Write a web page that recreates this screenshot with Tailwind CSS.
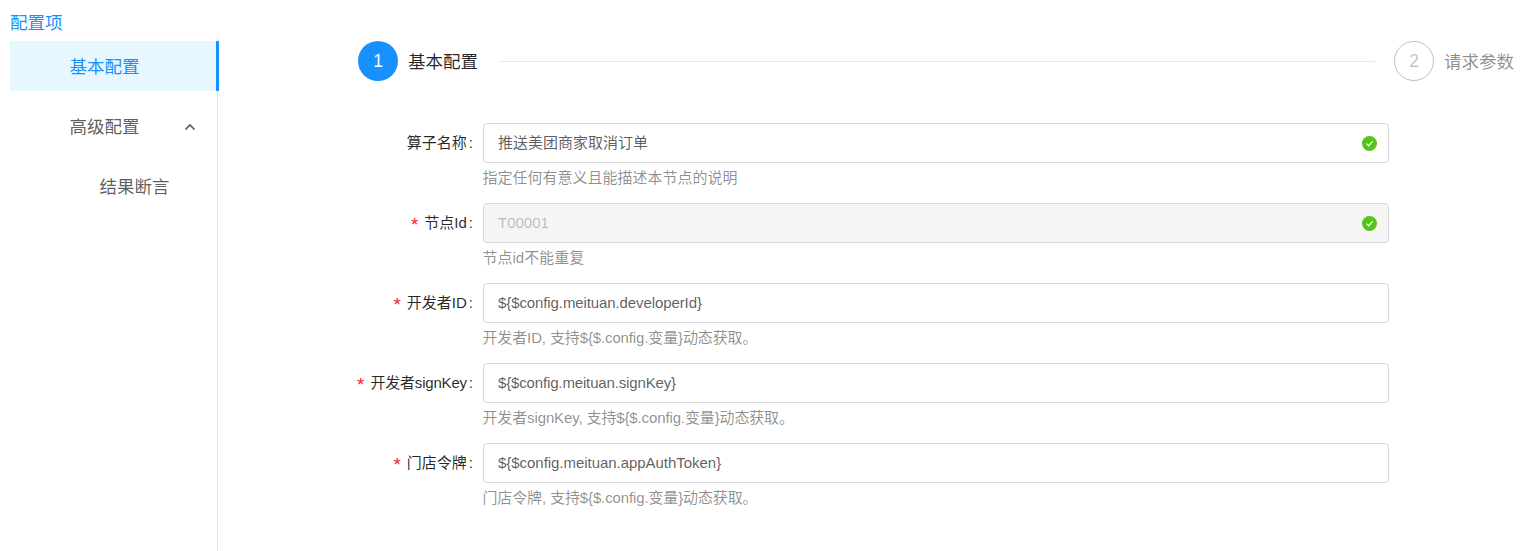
<!DOCTYPE html>
<html lang="zh">
<head>
<meta charset="utf-8">
<script src="https://cdn.jsdelivr.net/npm/@tailwindcss/browser@4"></script>
</head>
<body class="bg-white">
<div class="relative h-[551px] w-[1537px] overflow-hidden font-['Liberation_Sans','Noto_Sans_CJK_SC',sans-serif] text-[15px] text-[#000000d9]">
  <div class="flex h-full pl-[10px]">
    <aside class="flex w-[209px] shrink-0 flex-col">
      <div class="flex h-[37px] items-end text-[17.5px] leading-[28px] text-[#1890ff]">配置项</div>
      <div class="mr-[1px] flex-1 border-r border-[#e8e8e8] pt-[4px]">
        <div class="relative -mr-[2px] flex h-[50px] items-center border-r-[3px] border-[#1890ff] bg-[#e6f7ff] pl-[59.5px] pt-[2px] text-[17.5px] text-[#1890ff]">基本配置</div>
        <div class="mt-[10px] flex h-[50px] items-center justify-between pl-[59.5px] pr-[21px] pt-[2px] text-[17.5px] text-[#000000a6]">
          <span>高级配置</span>
          <svg class="h-[12px] w-[12px]" viewBox="0 0 12 12" fill="none" stroke="#595959" stroke-width="1.7"><path d="M1.5 8.5 6 4l4.5 4.5"/></svg>
        </div>
        <div class="mt-[10px] flex h-[50px] items-center pl-[89.5px] pt-[2px] text-[17.5px] text-[#000000a6]">结果断言</div>
      </div>
    </aside>
    <main class="flex-1 pl-[139px] pt-[41px]">
      <div class="flex h-[40px] items-center">
        <div class="flex h-[40px] w-[40px] items-center justify-center rounded-full bg-[#1890ff] text-[17.5px] text-white">1</div>
        <div class="ml-[10px] pt-[2px] text-[17.5px] text-[#000000d9]">基本配置</div>
        <div class="ml-[20px] mr-[19px] h-px flex-1 bg-[#e8e8e8]"></div>
        <div class="flex h-[40px] w-[40px] items-center justify-center rounded-full border border-[#00000040] text-[17.5px] text-[#00000040]">2</div>
        <div class="ml-[10px] mr-[23px] pt-[2px] text-[17.5px] text-[#00000073]">请求参数</div>
      </div>

      <form class="mt-[42px] flex w-[1031px] flex-col">
        <div class="flex h-[80px]">
          <div class="flex h-[40px] w-[125px] items-center justify-end whitespace-nowrap pr-[10px]"><span>算子名称</span><span class="ml-[2px]">:</span></div>
          <div class="flex-1">
            <div class="flex h-[40px] items-center justify-between rounded-[4px] border border-[#d9d9d9] bg-white pl-[14px] pr-[11px] text-[#000000a6]">
              <span>推送美团商家取消订单</span>
              <svg class="h-[15px] w-[15px]" viewBox="0 0 15 15"><circle cx="7.5" cy="7.5" r="7.5" fill="#52c41a"/><path d="M4.5 7.6 6.7 9.8 10.6 5.4" fill="none" stroke="#fff" stroke-width="1.3"/></svg>
            </div>
            <div class="mt-[4px] -ml-[0.5px] leading-[22px] text-[#00000073]">指定任何有意义且能描述本节点的说明</div>
          </div>
        </div>
        <div class="flex h-[80px]">
          <div class="flex h-[40px] w-[125px] items-center justify-end whitespace-nowrap pr-[10px]"><span class="mr-[4px] mt-[7px] font-['Liberation_Mono'] text-[19px] leading-none text-[#f5222d]">*</span><span>节点Id</span><span class="ml-[2px]">:</span></div>
          <div class="flex-1">
            <div class="flex h-[40px] items-center justify-between rounded-[4px] border border-[#d9d9d9] bg-[#f5f5f5] pl-[14px] pr-[11px] text-[#00000040]">
              <span>T00001</span>
              <svg class="h-[15px] w-[15px]" viewBox="0 0 15 15"><circle cx="7.5" cy="7.5" r="7.5" fill="#52c41a"/><path d="M4.5 7.6 6.7 9.8 10.6 5.4" fill="none" stroke="#fff" stroke-width="1.3"/></svg>
            </div>
            <div class="mt-[4px] -ml-[0.5px] leading-[22px] text-[#00000073]">节点id不能重复</div>
          </div>
        </div>
        <div class="flex h-[80px]">
          <div class="flex h-[40px] w-[125px] items-center justify-end whitespace-nowrap pr-[10px]"><span class="mr-[4px] mt-[7px] font-['Liberation_Mono'] text-[19px] leading-none text-[#f5222d]">*</span><span>开发者ID</span><span class="ml-[2px]">:</span></div>
          <div class="flex-1">
            <div class="flex h-[40px] items-center rounded-[4px] border border-[#d9d9d9] bg-white pl-[14px] pr-[11px] tracking-[-0.1px] text-[#000000a6]">${$config.meituan.developerId}</div>
            <div class="mt-[4px] -ml-[0.5px] leading-[22px] tracking-[-0.13px] text-[#00000073]">开发者ID, 支持${$.config.变量}动态获取。</div>
          </div>
        </div>
        <div class="flex h-[80px]">
          <div class="flex h-[40px] w-[125px] items-center justify-end whitespace-nowrap pr-[10px]"><span class="mr-[4px] mt-[7px] font-['Liberation_Mono'] text-[19px] leading-none text-[#f5222d]">*</span><span class="tracking-[-0.2px]">开发者signKey</span><span class="ml-[2px]">:</span></div>
          <div class="flex-1">
            <div class="flex h-[40px] items-center rounded-[4px] border border-[#d9d9d9] bg-white pl-[14px] pr-[11px] tracking-[-0.15px] text-[#000000a6]">${$config.meituan.signKey}</div>
            <div class="mt-[4px] -ml-[0.5px] leading-[22px] tracking-[-0.13px] text-[#00000073]">开发者signKey, 支持${$.config.变量}动态获取。</div>
          </div>
        </div>
        <div class="flex h-[80px]">
          <div class="flex h-[40px] w-[125px] items-center justify-end whitespace-nowrap pr-[10px]"><span class="mr-[4px] mt-[7px] font-['Liberation_Mono'] text-[19px] leading-none text-[#f5222d]">*</span><span>门店令牌</span><span class="ml-[2px]">:</span></div>
          <div class="flex-1">
            <div class="flex h-[40px] items-center rounded-[4px] border border-[#d9d9d9] bg-white pl-[14px] pr-[11px] tracking-[-0.04px] text-[#000000a6]">${$config.meituan.appAuthToken}</div>
            <div class="mt-[4px] -ml-[0.5px] leading-[22px] tracking-[-0.13px] text-[#00000073]">门店令牌, 支持${$.config.变量}动态获取。</div>
          </div>
        </div>
      </form>
    </main>
  </div>
</div>
</body>
</html>
